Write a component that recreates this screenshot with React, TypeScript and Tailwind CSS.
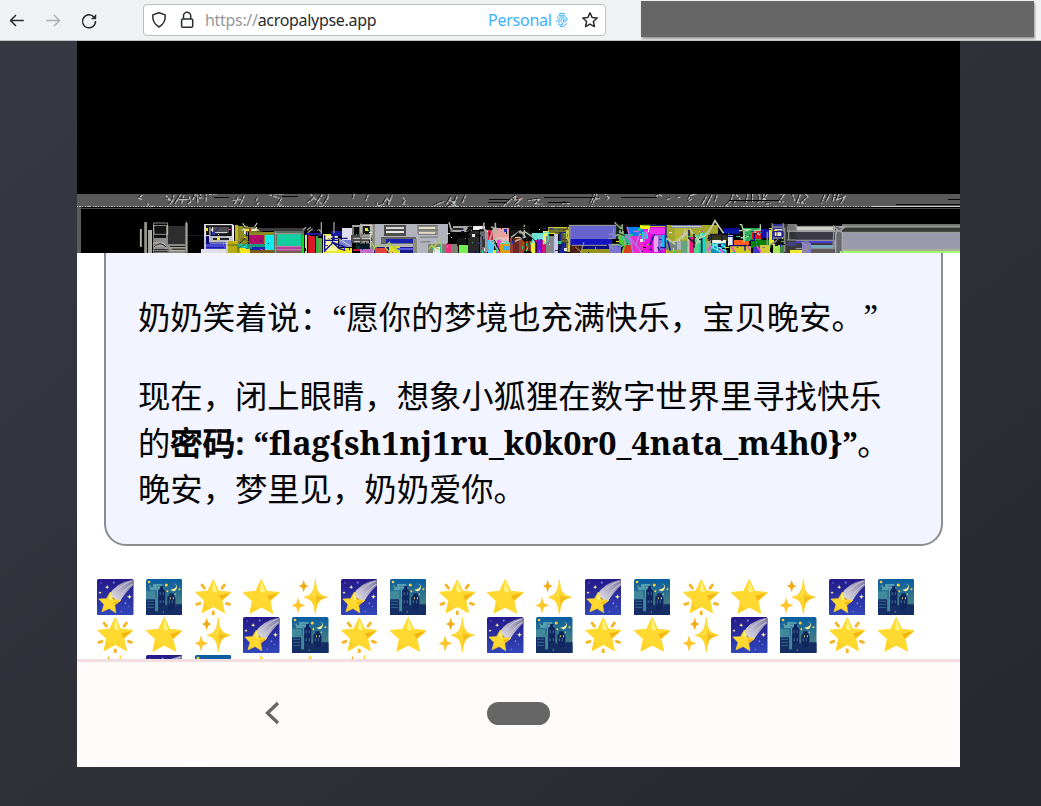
import React from "react";

type Bar = [number, number, number, number, string];
type Line = [string, string, number];

/* Each band segment is drawn on a 3x grid. */
const leftBars: Bar[] = [
  [210, 132, 7, 54, "#8b8b84"], [222, 112, 10, 92, "#77766f"], [233, 135, 12, 69, "#a5a59c"],
  [248, 120, 45, 84, "#85847a"], [252, 124, 37, 34, "#111111"], [258, 158, 35, 46, "#8d8d8d"],
  [293, 123, 54, 81, "#2e2e31"], [293, 177, 57, 27, "#8a8981"], [300, 183, 50, 4, "#222222"], [306, 190, 44, 4, "#3f3f3c"],
  [345, 115, 8, 89, "#696863"], [353, 149, 52, 5, "#1d1d1d"],
  [403, 117, 85, 87, "#c8c8cf"], [407, 121, 79, 31, "#151515"], [426, 125, 50, 18, "#4b4c50"], [408, 152, 12, 30, "#060660"],
  [418, 152, 52, 22, "#b9bac9"], [407, 176, 60, 16, "#4a46d4"], [430, 158, 48, 8, "#23232a"], [393, 192, 75, 12, "#dedfea"],
  [474, 168, 40, 36, "#b3ad13"], [488, 121, 4, 50, "#ffffff"], [494, 121, 9, 55, "#c2b620"], [505, 122, 30, 55, "#8e8c24"],
  [522, 126, 38, 15, "#e6e34c"], [536, 131, 8, 8, "#ee1b38"], [546, 127, 15, 10, "#f5f4b0"], [565, 128, 140, 10, "#3b3b3e"],
  [537, 141, 75, 35, "#8a8d26"], [537, 151, 46, 25, "#b20b69"], [503, 176, 34, 14, "#12c5bb"], [509, 190, 30, 14, "#f2e818"],
  [530, 176, 55, 16, "#159d79"], [546, 187, 38, 17, "#1728b0"], [585, 150, 27, 54, "#09edf3"], [540, 196, 71, 8, "#7b5c19"],
  [613, 137, 90, 67, "#5c7063"], [622, 146, 72, 38, "#13cda0"], [622, 184, 72, 14, "#b63fa5"], [622, 198, 72, 6, "#74614d"],
  [695, 151, 8, 53, "#12d921"], [704, 150, 8, 54, "#b7eb98"], [714, 151, 6, 53, "#c81423"], [721, 153, 14, 51, "#dd1927"], [737, 153, 6, 51, "#28b944"],
  [744, 159, 13, 45, "#5baa47"], [708, 143, 48, 8, "#1b16a3"], [759, 146, 44, 58, "#e8ec33"], [764, 150, 36, 48, "#f6f69e"],
  [784, 138, 35, 14, "#1419a4"], [816, 130, 29, 35, "#dfe0ee"], [808, 166, 38, 20, "#7980d1"], [801, 188, 46, 16, "#edea20"],
  [846, 121, 54, 54, "#737373"], [852, 126, 16, 25, "#090909"], [878, 122, 22, 22, "#aaaabc"], [842, 151, 58, 24, "#4b4b4b"],
  [859, 175, 41, 18, "#053b30"], [850, 193, 50, 5, "#d10c31"], [874, 198, 26, 6, "#c57bd8"],
];
const leftLines: Line[] = [
  ["M211 132v52m17-71v91m15-68v57m8-79h42v34h-41zm98-5v92m-53-12h52m-49 8h48m-99-23h33m-32 9h34M249 199l12-24 21 0 11 25", "#d2d1c4", 2],
  ["M252 186q18-20 36 0m-37 8h44m-44 6h44", "#222", 3],
  ["M404 119h83v40m-81-35v28h14v-26m8 0v17h44m-47-12v7", "#eeeeee", 3],
  ["M407 174h60m-59 14h54M422 150l25-22", "#1519a3", 3],
  ["M518 115l8 12-10 11m45-24-7 13 13 11", "#d2d3c4", 4],
  ["M503 173l16-14 18 11-33 20m14-50h57M473 180h31v23", "#646015", 3],
  ["M518 119l5 10h32l6-10M525 160l-17 16m20-34h10", "#19191b", 3],
  ["M617 140v64m-4-58h83m-82 38h83m-84 10h83", "#c8a69d", 2],
  ["M699 135l10-9m2 10 12-10m-10 17 15-12m26-20v36m38-36v34m-46-12 7 7", "#9c9d99", 4],
  ["M764 151v50M764 166h39M790 151l-4 25-22 21m23-25 20 18 19 6m-34-42v20l33 12m-43-26h51", "#11138c", 4],
  ["M806 161l35 22M850 160h50m-48 10h48M847 123h27v22", "#d9d9d6", 3],
];
const midBars: Bar[] = [
  [0, 116, 46, 88, "#8a8a83"], [8, 123, 24, 26, "#151515"], [0, 158, 35, 18, "#494949"], [0, 176, 30, 17, "#071b22"], [0, 193, 45, 11, "#c06aca"],
  [46, 118, 218, 86, "#b1b4bc"], [73, 121, 65, 31, "#4c4c4c"], [78, 126, 54, 5, "#d9dad9"], [78, 138, 54, 5, "#e8e8e3"],
  [172, 121, 61, 26, "#92928d"], [178, 126, 48, 7, "#e5dfc8"], [178, 140, 48, 6, "#e5dfc8"], [62, 155, 105, 22, "#6c6d6f"], [79, 161, 81, 13, "#1821b0"],
  [43, 185, 124, 19, "#171989"], [46, 190, 35, 14, "#dc4135"], [88, 183, 33, 21, "#dadc21"], [111, 190, 55, 5, "#5a5ae0"],
  [160, 161, 12, 43, "#8a8b79"], [205, 176, 90, 28, "#7c8172"], [219, 185, 21, 19, "#e8e9f6"], [240, 179, 6, 25, "#14be92"], [258, 178, 14, 26, "#eb3178"],
  [267, 123, 100, 35, "#080808"], [279, 124, 57, 16, "#a7a7a0"], [340, 124, 34, 11, "#f1f1f6"], [290, 158, 27, 25, "#131313"], [297, 180, 27, 24, "#77ed55"],
  [325, 137, 32, 67, "#292929"], [360, 131, 21, 73, "#69696f"], [365, 162, 17, 25, "#34353d"], [375, 134, 28, 66, "#98999b"],
  [384, 136, 15, 30, "#dc2546"], [384, 165, 18, 39, "#4bcaff"], [400, 129, 48, 36, "#e4a3a0"], [404, 156, 43, 18, "#edb8b6"], [411, 166, 12, 38, "#f33adf"],
  [421, 174, 35, 30, "#df9f10"], [430, 183, 28, 13, "#3eb5f2"], [451, 123, 59, 36, "#151516"], [451, 158, 40, 46, "#9b3e34"],
  [460, 169, 17, 35, "#6a2927"], [487, 167, 29, 32, "#a74610"], [516, 145, 35, 58, "#7ae0dc"], [513, 173, 14, 31, "#ecef32"], [526, 166, 34, 38, "#d80f72"],
  [532, 161, 15, 43, "#6e10dc"], [550, 137, 13, 39, "#eeea78"], [559, 153, 24, 51, "#858789"], [563, 126, 64, 20, "#cdc935"], [568, 133, 58, 10, "#77752b"],
  [583, 146, 12, 58, "#c8c8ee"], [596, 141, 22, 63, "#1a2294"], [602, 145, 18, 29, "#696b2d"], [617, 135, 13, 67, "#c4c64d"],
  [626, 121, 144, 40, "#6864ce"], [631, 161, 124, 21, "#1513c1"], [630, 180, 39, 24, "#51220b"], [666, 181, 84, 10, "#080a82"], [663, 191, 85, 13, "#94941b"],
  [768, 119, 17, 42, "#182d17"], [777, 137, 16, 50, "#4fcf34"], [803, 127, 45, 77, "#087ef0"], [790, 148, 30, 56, "#2cb988"],
  [812, 154, 37, 50, "#ea2ccd"], [791, 180, 26, 24, "#da3e22"], [748, 176, 35, 28, "#7774d4"], [840, 121, 60, 10, "#f8f70c"], [848, 132, 52, 72, "#f010dd"],
  [846, 141, 17, 21, "#17d6d3"], [872, 151, 28, 26, "#f229ed"],
];
const midLines: Line[] = [
  ["M6 121h30v29H10m-7-34v28m28-26v70M5 161h28m-28 10h28", "#dddcd2", 3],
  ["M75 124h62m-62 10h62m-61 13h62m35-25h61m-60 13h60m-60 13h60M62 159h101m-101 17h15v-17M179 157l55-1m-53 15 30-1", "#55554e", 2],
  ["M34 172l10 15-5 16m5-16 23-6m23-11-14 17 13 16m0-28 27 23m89-4 11-14 8 20m12-29-14 14 14 8m8-34v45", "#a5cb56", 4],
  ["M267 112l6 20 28 4 6-12m-36 14 51-1m51-24-4 16 10 12m27-28v30m-13-18 20 10", "#aaa9a3", 5],
  ["M278 132h32m-42 17h40M323 128h13l-18 27h12M320 139l12-14M349 151l13 1m-5-16h15", "#020202", 5],
  ["M453 157l28-19 15 18-31 13m28-50v38l-28 0m-64-27-12 33 30 37m-12-75v35l46 16m21-31 22-4 23 16", "#b6b8ac", 4],
  ["M453 127h56m-56 6h56M457 164l18-20 19 25", "#050505", 4],
  ["M399 149l12 55m9-29h35m-20-11 10 14m52 23 15-27 18-25 35-8v24l-15 14m-38-31 28 17", "#43e5bd", 3],
  ["M403 165l17 35m31-23 16-16m29 7v33m11-35v35m10-42 12 14 0 29", "#10151c", 3],
  ["M565 132h57v-8m-36 20h20v20h15v37m-15-29h19m-18 16h-13", "#33332a", 3],
  ["M626 121h142m-7 10v29h-18m17-12h-13m-112 33h106m-95 5 18 16m8-31-10 33m82-26 18 16M630 123v58", "#a1a09a", 3],
  ["M764 112l18 17-6 33m11-44-1 25 9 30-8 31m-34-25h33m-21-26 23-10", "#91af82", 5],
  ["M768 113l10 9m-7 12h15m-11 11 22 8m-20 22 17 13", "#151719", 3],
  ["M801 125l9 33 22 28m-37-35 17 16 7 37m21-61-12 36 17 25m7-52 26-25m-26 44 5-34m-20 2h-17", "#bc6ce9", 5],
  ["M845 121h42v17q-2 36-26 43m39-54h-26m-76 47-11 30", "#81b711", 4],
];
const rightBars: Bar[] = [
  [0, 119, 70, 85, "#c6c01b"], [0, 125, 48, 79, "#d908db"], [0, 130, 46, 16, "#f12eed"], [10, 149, 33, 46, "#8d6ed2"], [13, 153, 12, 48, "#eca5ed"],
  [35, 150, 16, 36, "#15bced"], [52, 121, 153, 83, "#a3a72e"], [66, 121, 87, 8, "#5558bf"], [74, 128, 40, 37, "#b6b833"],
  [49, 171, 55, 25, "#738382"], [80, 169, 24, 26, "#aeafbc"], [93, 167, 26, 37, "#63a67e"], [119, 157, 17, 47, "#ed177e"], [133, 149, 14, 55, "#51d78d"],
  [151, 145, 15, 59, "#11dfc9"], [167, 170, 18, 34, "#a5af7c"], [175, 150, 58, 18, "#363918"], [180, 165, 47, 8, "#f0f0e1"], [184, 175, 45, 29, "#168eb6"],
  [222, 130, 49, 16, "#0a17a1"], [235, 151, 15, 31, "#e6eff0"], [248, 165, 49, 14, "#ff5d19"], [239, 184, 63, 20, "#cec91a"],
  [279, 130, 54, 39, "#27ad58"], [305, 138, 31, 24, "#dc1520"], [334, 133, 24, 27, "#1311b4"], [302, 164, 61, 25, "#0a800b"],
  [309, 185, 22, 19, "#3f35bf"], [331, 181, 30, 23, "#d2ca35"], [357, 129, 17, 52, "#e3e92c"], [366, 117, 36, 48, "#33319b"],
  [371, 133, 24, 24, "#f6f6e7"], [371, 163, 32, 13, "#171306"], [370, 179, 37, 25, "#a7e450"], [391, 179, 24, 25, "#3d8740"],
  [402, 118, 36, 86, "#393936"], [410, 123, 31, 18, "#737471"], [414, 138, 23, 28, "#313235"], [410, 170, 29, 12, "#424286"],
  [437, 122, 118, 82, "#3c3a45"], [437, 127, 118, 15, "#d0d0cd"], [437, 166, 119, 8, "#4c3fd1"], [420, 194, 54, 10, "#f4e72b"],
  [455, 175, 27, 29, "#837acb"], [482, 181, 74, 9, "#75abc0"], [482, 190, 81, 14, "#5d5b5e"], [557, 122, 20, 82, "#686a72"],
  [577, 117, 353, 11, "#72726f"], [577, 128, 353, 14, "#373a36"], [577, 142, 353, 51, "#999bac"], [575, 192, 355, 6, "#a7b195"], [571, 198, 359, 6, "#a3fa70"],
];
const rightLines: Line[] = [
  ["M0 121h48v39m-35-12-13 32m46-29v37H31m-8-2 8 16m19-47 11 42", "#0d148f", 4],
  ["M66 125h87m-84 46q30-7 38-39M48 159l28 19m19-17 25-27 31 40m-36-33v63m41-59-17 33m46-52q-15 26-33 33m33-33 10-19 12 18 14 20", "#c5cbaa", 5],
  ["M117 135v25l19 15m-4-29v42m23-29v45M180 149h36v19m-32 6v-23", "#1f1e2d", 5],
  ["M176 199q24-39 52-10m-47-4 41 19m-22-28 3 20m-19-11 27 16m-25-25 44 23", "#5cebe6", 4],
  ["M173 199l11-15m25 9 13 11m23-18 11 17m35-22 10 16m19-15 13 18", "#ef43ed", 5],
  ["M269 119h6l4 15h25m-37 3h29m35-19v17l-24 4m-25-5v37m-10-12 24-5m12-15 23 11", "#b3e1aa", 4],
  ["M220 132h50m-47 13h26m-20 9h21v28m63-39v23h-12m-63 16h47v15", "#08088e", 4],
  ["M367 115v22h33v-22m-33 11h30m-24 31h28m-29-14v20m9-23v22m23-34v73m-43-21 24-16m-33-24v40", "#888988", 5],
  ["M372 133v22h24v-15h-23", "#151696", 4],
  ["M413 120h26v19h-23v26m-4-27h142m-117 28h117v24h-75m-25-17q31-8 22 14t-17 11m-22-7h24m90-70v22l-2 50", "#8e8f92", 4],
  ["M434 124h496m-353 18h353M411 165h26m19 11q15 0 15 15l-15 8", "#9f9f9b", 3],
  ["M553 126l9 9-5 14m9-23h18l-13 11 9 11m-30-10h24m-17 4v61m20-57v57", "#a9a9a8", 4],
];

const grayMarks = {
  left: "M216 29l-11 10 10 4m16 11 6 8h14m35-32 13 14-11-3m23-12-3 17-10 12m34-31-19 30m27-27-6 25m-8-12 30-1m1-8 4 16-8 5m24-31-10 20m13-16 3 25m5-30 6 14m-9 0 14 4m9-18-1 28m9-24 27-2m44 20 26-2m-9-8-11 22m29-25-12 26m52-20-5 10m9 3-8 8m39-31 36 13-10 17 12 1m-23-33 29 0m79 0 20 20 21 15m-5-34-20 33m-7-20-17 12m51 2 10-16 1-16m78 3-4 16",
  mid: "M24 29l-7 18m34 5 0 10 17-4 11-19 7 8-2 13 12-31m31 7 8 10-7 10 13 1m79 5 32-14m7 10 14-23-5 11 16 4-20 15 18-4m8-27-10 26m-5-12 13 15m28-32-9 22m123 9 25-21 12-10-4 13 20-3-17 15 18 10m19-20 36-5-14 14 22 1m59 1 7-6 18 5m74-34-15 34m20-32-4 17 13-2m-17 5-5 14m35-35 14 15-7 6",
  right: "M17 34l9-7 9 6m15 10 12-5m19-1 10-2m23 7 7-12 20-5m-17 16-10 7m55-14-14 25m30-30-16 32m32-31-7 19m62-4-6 12m-1-32-7 22-15 15m31-34 12 15m23-18-6 30m20-30-1 28m19-29 5 23-9 6m20-27-4 26m13-25-8 15 14 5m-9 9 14-2m27-28 14 1-15 22 14 1m26-22 6 19m17-19-9 24 25 2m-16-29 14-2 9 11-19 17m74-34-14 38m27-33-13 27m26-26-6 27m18-25-6 18 25-9-15 23",
};

function Segment({ origin, bars, lines, marks }: { origin: number; bars: Bar[]; lines: Line[]; marks: string }) {
  return (
    <g transform={`translate(${origin} -9) scale(.333333)`} fill="none">
      {bars.map(([x, y, w, h, c], i) => <rect key={i} x={x} y={y} width={w} height={h} fill={c} shapeRendering="crispEdges" />)}
      {lines.map(([d, c, w], i) => <path key={i} d={d} stroke={c} strokeWidth={w} />)}
      <path d={marks} stroke="#161616" strokeWidth="3" transform="translate(-2 -1)" />
      <path d={marks} stroke="#c2c4c0" strokeWidth="3.6" strokeDasharray="9 3 14 2 5 4" transform="translate(1 1)" />
      <path d={marks} stroke="#c7684f" strokeWidth="2.5" strokeDasharray="2 71 3 113" />
      <path d={marks} stroke="#4ea7a1" strokeWidth="2.5" strokeDasharray="2 94 3 127" transform="translate(3 0)" />
    </g>
  );
}

/* Single-pixel fragments scattered over the densest part of the band. */
function Fragments() {
  const palette = ["#e9e92c", "#15174e", "#cf39b6", "#e6e9e5", "#111", "#25c88b", "#8b8d80", "#2734bd"];
  return (
    <g shapeRendering="crispEdges">
      {Array.from({ length: 230 }, (_, i) => {
        const x = 128 + (i * 149 + ((i * i * 17) % 83)) % 580;
        const y = 34 + (i * 37 + ((i * i) % 11)) % 25;
        if ((x > 195 && x < 227) || (x > 298 && x < 370 && y < 52) || (x > 491 && x < 537 && y < 52)) return null;
        return <rect key={i} x={x} y={y} width={i % 3 ? 1 : 3} height={i % 4 ? 1 : 3} fill={palette[(i * 5 + x) % 8]} />;
      })}
    </g>
  );
}

function Corruption() {
  return (
    <svg className="block h-[59px] w-[883px] shrink-0" viewBox="0 0 883 59">
      <rect width="883" height="59" fill="#000" />
      <rect width="883" height="13" fill="#595959" />
      <rect y="13" width="4" height="46" fill="#5a5a57" />
      <path d="M4 14.5h879" stroke="#484848" />
      <path d="M0 12.5h795" stroke="#b9b9b9" strokeDasharray="1 1 2 1 1 2" />
      <path d="M12 12.5h760" stroke="#dacb74" strokeDasharray="1 19 1 37" />
      <path d="M795 12.5h88" stroke="#d2d2d2" />
      <Segment origin={-7} bars={leftBars} lines={leftLines} marks={grayMarks.left} />
      <Segment origin={283} bars={midBars} lines={midLines} marks={grayMarks.mid} />
      <Segment origin={573} bars={rightBars} lines={rightLines} marks={grayMarks.right} />
      <Fragments />
      <path d="M137 3.5h15m53-1h16m190 6h19m41 0h22m-26-5h51m26 0h36m-168 2h20m220 1h50m169-1h62M819 10.5h64" stroke="#080808" />
    </svg>
  );
}

const starPath = "M18 .8 23.3 12 35.7 13.4 26.6 21.6 29.2 33.7 18 27.6 6.8 33.7 9.3 21.6 .3 13.4 12.6 12Z";

function Star() {
  return (
    <g strokeLinejoin="round">
      <path d={starPath} fill="#ffd92f" stroke="#ffd92f" strokeWidth="1" />
      <path d="M18 1.5 22 12.6 19.5 13.5 16.7 11.5Z" fill="#fff27a" />
      <path d="M23.8 16.5 35 13.8 26.3 21.2Z" fill="#f4b613" />
      <path d="M9.5 22.5 7.5 32.8 18 27l-6 1.2Z" fill="#fccb25" opacity=".65" />
    </g>
  );
}

function Emoji({ kind }: { kind: number }) {
  return (
    <svg className="block h-[36.5px] w-[36.5px] shrink-0" viewBox="0 0 36 36">
      {kind === 0 && <>
        <defs><linearGradient id="night" x2="0" y2="1"><stop stopColor="#251989" /><stop offset="1" stopColor="#3147ba" /></linearGradient>
          <linearGradient id="trail" x1="1" x2="0" y2="1"><stop stopColor="#77739f" /><stop offset="1" stopColor="#f0eef0" /></linearGradient></defs>
        <rect width="36" height="36" rx="1.8" fill="url(#night)" />
        <path d="M12 16Q18 4 34 1L36 1V6Q29 12 22 23Z" fill="url(#trail)" />
        <path d="M17 15Q23 6 34 2M20 20Q28 9 35 5" stroke="#c9c4d4" fill="none" />
        <g transform="translate(1.4 12.3) rotate(4 11 11) scale(.61)"><Star /></g>
        <path d="m10 6 .6 1.5 1.5.6-1.5.6L10 10l-.6-1.3-1.5-.6 1.5-.6Zm22 9 .7 1.8 1.8.7-1.8.7L32 20l-.7-1.8-1.8-.7 1.8-.7ZM3 12l.5 1.1 1.1.5-1.1.5L3 15l-.5-.9-1.1-.5 1.1-.5Z" fill="#fff29b" />
        <g fill="#7287dd"><circle cx="16.5" cy="3.5" r="1.1" /><circle cx="4" cy="4" r=".7" /><circle cx="28" cy="24" r="1" /><circle cx="31" cy="27" r=".7" /><circle cx="24" cy="32" r=".7" /></g>
      </>}
      {kind === 1 && <>
        <defs><linearGradient id="dusk" x2="0" y2="1"><stop stopColor="#075ca4" /><stop offset=".65" stopColor="#437e83" /><stop offset="1" stopColor="#152c68" /></linearGradient></defs>
        <rect width="36" height="36" rx="1.8" fill="url(#dusk)" />
        <path d="M7 5h9v13h-5V11H4V8h3Z" fill="#579faf" /><path d="M0 12h9v7h5V8h4v24H0Z" fill="#42899b" />
        <path d="M12 14V11l2-2V7h3v2l2 3v20h-7ZM21 31V18l2-2 0-2h4l1 3 1 2v11Z" fill="#10265f" />
        <path d="M0 20h9v12h4v-6h8v4h8v-5h7v11H0Z" fill="#152d65" />
        <path d="M1 22h7M1 25h7M1 28h7M10 7h4M10 10h2" stroke="#347795" strokeWidth=".8" />
        <path d="M14 13v3m3-3v3m-3 5v3m3-3v3m6-3v3m3-3v3" stroke="#456e96" />
        <path d="M24 18v2m3-2v2m-10 12v1" stroke="#dccb58" />
        <path d="M27 4.2Q34 8 24 10.7q4 3.3 6-.8t-3-5.7" fill="#fff39b" />
        <g fill="#ffcf2a"><circle cx="3" cy="3" r="1.3" /><circle cx="20" cy="6" r="1.5" /><circle cx="21" cy="12" r="1" /><circle cx="33" cy="10" r="1" /><circle cx="4" cy="7" r=".7" /><circle cx="29" cy="15" r=".8" /></g>
      </>}
      {kind === 2 && <><g stroke="#f5b525" strokeWidth="2.8" strokeLinecap="round"><path d="m7 6 2.3 3M29 6l-2.3 3M1.8 25l3-1M34 25l-3-1M18 32.5v2.2" /></g><g transform="translate(.3 0) scale(.985)"><Star /></g></>}
      {kind === 3 && <Star />}
      {kind === 4 && <g>
        <path d="M23 .5C24.4 12 25 15 35 18 25 20.5 24.5 25 23 34.5 21.4 24 20.5 20.5 12 18 20.5 15.5 21.5 12 23 .5Z" fill="#ffd42b" stroke="#ffd42b" strokeWidth=".7" />
        <path d="M23 1q.4 14-3 15.6L13 18q8-.3 9-2.4Q24 12 23 1Z" fill="#ffef71" />
        <path d="M24 16q2 2 10.3 2-8 1.5-9.5 5.5L23 33q1.4-12 1-17" fill="#eebb21" />
        <path d="M11.5 .8 13 5.5 16.2 7 13 8.6 11.5 13 10 8.6 6.8 7 10 5.5Z" fill="#f2aa16" />
        <path d="M6 18 7.8 24 13 26 7.8 28 6 34 4.2 28-.2 26l4.4-2Z" fill="#ffc52c" />
      </g>}
    </svg>
  );
}

const chrome = { fill: "none", stroke: "#292c30", strokeWidth: 1.5, strokeLinejoin: "round" as const };

export default function App() {
  return (
    <main className="flex h-[806px] w-[1041px] flex-col overflow-hidden bg-linear-to-br from-[#373a43] to-[#25282e]">
      <header className="flex h-[41px] shrink-0 items-start border-b border-[#c2c3c4] bg-[#f0f1f3]">
        <div className="flex h-10 w-[143px] shrink-0 items-center">
          <svg className="h-10 w-[120px]" viewBox="0 0 120 40">
            <path d="M23.8 20.5H10.5M16 15l-5.5 5.5L16 26" {...chrome} />
            <path d="M46 20.5h13.5M54 15l5.5 5.5L54 26" {...chrome} stroke="#adaeb0" />
            <path d="M94.1 17.3A6.5 6.5 0 1 0 95.5 21" {...chrome} />
            <path d="M96.2 14v5.2h-5.3Z" fill="#292c30" />
          </svg>
        </div>
        <div className="mt-1 flex h-8 w-[463px] shrink-0 items-center rounded border border-[#bcbdbe] bg-white pl-[7px] font-['Noto_Sans',sans-serif] text-[16px]">
          <svg className="h-7 w-[45px] shrink-0" viewBox="0 0 45 28">
            <path d="m8 6.7 6.2 2.2c.4 5.6-1.5 9.5-6.2 12.1-4.7-2.6-6.6-6.5-6.2-12.1Z" {...chrome} />
            <rect x="30.6" y="13" width="11.1" height="8.3" rx="1.3" {...chrome} /><path d="M32.5 13V9.8a3.6 3.6 0 0 1 7.2 0V13" {...chrome} />
          </svg>
          <div className="ml-[9px] w-[283px] shrink-0 whitespace-nowrap tracking-[-0.31px] text-[#272a2e]"><span className="text-[#96989b]">https://</span>acropalypse.app</div>
          <span className="w-[64px] shrink-0 tracking-[-0.25px] text-[#3dafff]">Personal</span>
          <svg className="ml-[4px] h-4 w-3 shrink-0" viewBox="0 0 12 16" fill="none" stroke="#3dafff" strokeWidth="1">
            <path d="M2.5 2.2Q6-.2 9.3 2.2M1.1 6.5C1.5 2 10.5 2 10.9 7.2v2M1 10V8M3 11.5V7.2C3.2 3.9 9 3.9 9 7.5v3M5 10V7.7c0-1.8 2.4-1.8 2.4 0V10q-.3 2-2.3 2M1.8 12Q3.5 13.8 7 12.5M3.8 14.4Q8.5 15.7 10.3 11" />
          </svg>
          <svg className="ml-[12px] h-5 w-5 shrink-0" viewBox="0 0 20 20"><path d="m10 2.7 2.1 4.7 5.1.6-3.8 3.5 1 5.1-4.4-2.5-4.4 2.5 1-5.1L2.8 8l5.1-.6Z" {...chrome} /></svg>
        </div>
        <div className="mt-[1px] ml-[35px] h-9 w-[393px] bg-[#666] shadow-[1px_2px_2px_#999]" />
      </header>

      <section className="mx-auto flex h-[726px] w-[883px] -translate-x-[2px] flex-col overflow-hidden bg-white">
        <div className="h-[153px] shrink-0 bg-black" />
        <Corruption />
        <article className="ml-[27px] h-[293px] w-[839px] shrink-0 rounded-b-[22px] border-x-2 border-b-2 border-[#8b8c90] bg-[#f2f4ff] pt-[40px] pl-[32px] font-['Noto_Serif','Droid_Serif','Liberation_Serif','Noto_Sans_CJK_SC',serif] text-[32.35px] leading-[46.5px] whitespace-nowrap text-[#050505] [text-spacing-trim:space-all]">
          <p className="h-[47px]">奶奶笑着说：“愿你的梦境也充满快乐，宝贝晚安。”</p>
          <div className="mt-[32px]">
            <p className="h-[46.5px]">现在，闭上眼睛，想象小狐狸在数字世界里寻找快乐</p>
            <p className="flex h-[46.5px]">的<strong className="block w-[687px]"><span className="font-normal [-webkit-text-stroke:1.3px_#050505]">密码</span>: “flag&#123;sh1nj1ru_k0k0r0_4nata_m4h0&#125;”</strong>。</p>
            <p className="h-[46.5px]">晚安，梦里见，奶奶爱你。</p>
          </div>
        </article>
        <div className="mt-[32.5px] ml-[20px] grid h-[80.5px] shrink-0 auto-rows-[38.3px] grid-cols-[repeat(17,48.8px)] overflow-hidden">
          {Array.from({ length: 40 }, (_, i) => <Emoji key={i} kind={i % 5} />)}
        </div>
        <nav className="flex h-[108px] shrink-0 items-center border-t-3 border-[#f2dde1] bg-[#fffbfa] pb-[3px]">
          <svg className="ml-[188px] h-6 w-4" viewBox="0 0 16 24"><path d="M13 2 2.5 12 13 22" fill="none" stroke="#666" strokeWidth="3.3" /></svg>
          <div className="ml-[206px] h-[23px] w-[63px] rounded-full bg-[#666]" />
        </nav>
      </section>
    </main>
  );
}
